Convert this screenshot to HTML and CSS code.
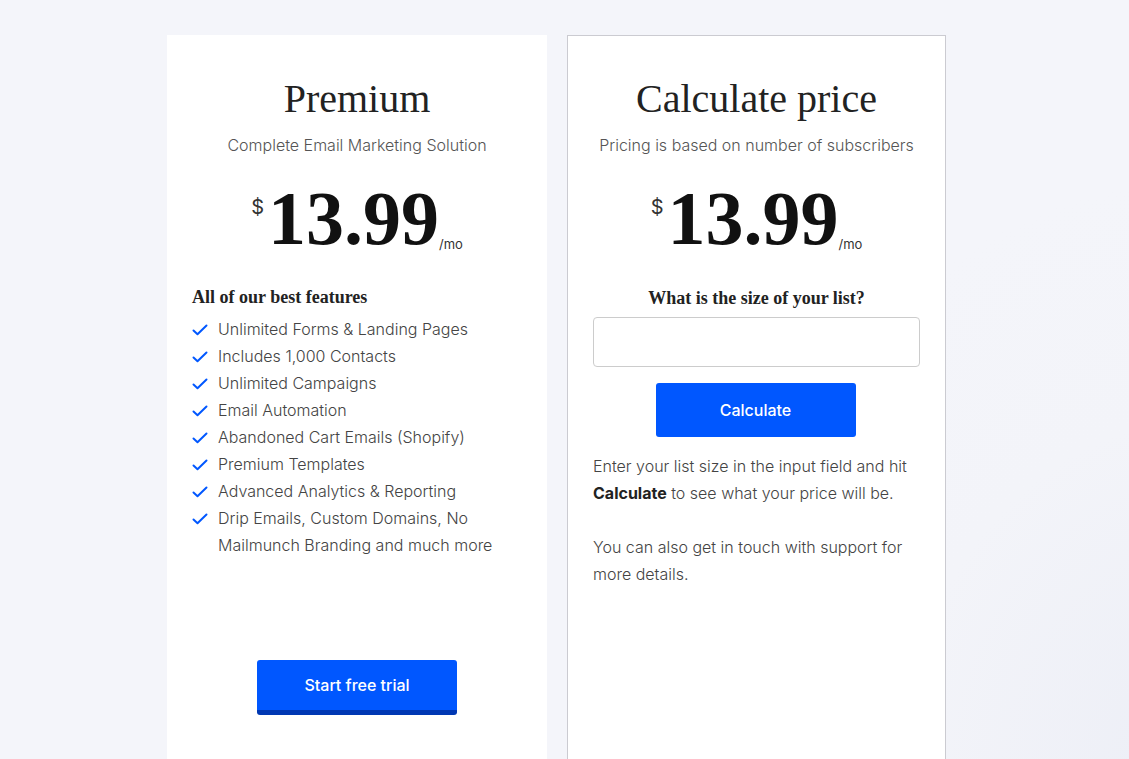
FILE: index.html
```html
<!DOCTYPE html>
<html lang="en">
<head>
<meta charset="utf-8">
<title>Pricing</title>
<link rel="stylesheet" href="styles.css">
</head>
<body>
<main class="plans">
  <section class="card card-premium">
    <h2 class="card-title">Premium</h2>
    <p class="card-sub">Complete Email Marketing Solution</p>
    <div class="price"><span class="cur">$</span><span class="amount">13.99</span><span class="per">/mo</span></div>
    <h3 class="feat-head">All of our best features</h3>
    <ul class="features">
      <li><svg class="check" viewBox="0 0 16 16"><path d="M1.5 8.5 L5.5 12.2 L14.5 3.5"/></svg><span>Unlimited Forms &amp; Landing Pages</span></li>
      <li><svg class="check" viewBox="0 0 16 16"><path d="M1.5 8.5 L5.5 12.2 L14.5 3.5"/></svg><span>Includes 1,000 Contacts</span></li>
      <li><svg class="check" viewBox="0 0 16 16"><path d="M1.5 8.5 L5.5 12.2 L14.5 3.5"/></svg><span>Unlimited Campaigns</span></li>
      <li><svg class="check" viewBox="0 0 16 16"><path d="M1.5 8.5 L5.5 12.2 L14.5 3.5"/></svg><span>Email Automation</span></li>
      <li><svg class="check" viewBox="0 0 16 16"><path d="M1.5 8.5 L5.5 12.2 L14.5 3.5"/></svg><span>Abandoned Cart Emails (Shopify)</span></li>
      <li><svg class="check" viewBox="0 0 16 16"><path d="M1.5 8.5 L5.5 12.2 L14.5 3.5"/></svg><span>Premium Templates</span></li>
      <li><svg class="check" viewBox="0 0 16 16"><path d="M1.5 8.5 L5.5 12.2 L14.5 3.5"/></svg><span>Advanced Analytics &amp; Reporting</span></li>
      <li><svg class="check" viewBox="0 0 16 16"><path d="M1.5 8.5 L5.5 12.2 L14.5 3.5"/></svg><span>Drip Emails, Custom Domains, No Mailmunch Branding and much more</span></li>
    </ul>
    <div class="cta-wrap"><a class="btn btn-trial" href="#">Start free trial</a></div>
  </section>
  <section class="card card-calc">
    <h2 class="card-title">Calculate price</h2>
    <p class="card-sub">Pricing is based on number of subscribers</p>
    <div class="price"><span class="cur">$</span><span class="amount">13.99</span><span class="per">/mo</span></div>
    <label class="calc-label" for="size">What is the size of your list?</label>
    <input class="calc-input" id="size" type="text">
    <div class="cta-wrap"><button class="btn btn-calc" type="button">Calculate</button></div>
    <p class="calc-text">Enter your list size in the input field and hit <strong>Calculate</strong> to see what your price will be.</p>
    <p class="calc-text">You can also get in touch with support for more details.</p>
  </section>
</main>
</body>
</html>
```
FILE: styles.css
```css
* { box-sizing: border-box; }
html, body { height: 100%; }
body {
  margin: 0;
  background: radial-gradient(ellipse 500px 600px at 1200px 780px, #eceef6 0%, #f3f4f9 60%, #f4f5fa 100%), #f4f5fa;
  font-family: Inter, "Liberation Sans", sans-serif;
  color: #444;
  overflow: hidden;
}
.plans {
  display: flex;
  gap: 20px;
  padding: 35px 0 0 167px;
  align-items: stretch;
  height: 100%;
}
.card {
  background: #fff;
  padding: 40px 25px 0;
  display: flex;
  flex-direction: column;
  min-height: 760px;
}
.card-premium { width: 380px; }
.card-calc { width: 379px; border: 1px solid #cbcbd1; padding: 39px 25px 0 25px; }
.card-title {
  margin: 0;
  text-align: center;
  font-family: "Liberation Serif", "DejaVu Serif", serif;
  font-weight: 400;
  font-size: 40px;
  line-height: 48px;
  color: #222;
}
.card-sub {
  margin: 11px 0 0;
  text-align: center;
  font-size: 16px;
  font-weight: 300;
  line-height: 22px;
  color: #555;
}
.price {
  display: flex;
  justify-content: center;
  align-items: flex-start;
  margin-top: 19px;
  color: #111;
}
.cur {
  font-size: 20px;
  line-height: 20px;
  margin-top: 22px;
  margin-right: 4px;
  color: #333;
}
.amount {
  font-family: "Liberation Serif", "DejaVu Serif", serif;
  font-weight: 700;
  font-size: 76px;
  line-height: 86px;
}
.per {
  align-self: flex-end;
  font-size: 13px;
  line-height: 13px;
  margin-bottom: 10px;
  color: #333;
}
.feat-head {
  margin: 23px 0 0;
  font-family: "Liberation Serif", "DejaVu Serif", serif;
  font-weight: 700;
  font-size: 18px;
  line-height: 26px;
  color: #222;
}
.features {
  list-style: none;
  margin: 6px 0 0;
  padding: 0;
}
.features li {
  display: flex;
  align-items: flex-start;
  gap: 10px;
  font-size: 16px;
  font-weight: 300;
  line-height: 27px;
  color: #444;
}
.check {
  flex: none;
  width: 16px;
  height: 16px;
  margin-top: 6px;
  fill: none;
  stroke: #0057ff;
  stroke-width: 2;
  stroke-linecap: round;
  stroke-linejoin: round;
}
.cta-wrap { display: flex; justify-content: center; }
.card-premium .cta-wrap { margin-top: 101px; }
.card-calc .cta-wrap { margin-right: 2px; }
.btn {
  display: flex;
  align-items: center;
  justify-content: center;
  width: 200px;
  background: #0057ff;
  color: #fff;
  font-family: Inter, "Liberation Sans", sans-serif;
  font-size: 16px;
  font-weight: 500;
  text-decoration: none;
  border: 0;
  border-radius: 3px;
}
.btn-trial {
  height: 55px;
  border-bottom: 5px solid #0038b3;
  padding-top: 0;
}
.btn-calc { height: 54px; margin-top: 16px; }
.calc-label {
  display: block;
  margin-top: 24px;
  text-align: center;
  font-family: "Liberation Serif", "DejaVu Serif", serif;
  font-weight: 700;
  font-size: 18px;
  line-height: 26px;
  color: #222;
}
.calc-input {
  display: block;
  margin-top: 6px;
  width: 100%;
  height: 50px;
  border: 1px solid #cccccc;
  border-radius: 4px;
  background: #fff;
}
.calc-text {
  margin: 16px 0 0;
  font-size: 16px;
  font-weight: 300;
  line-height: 27px;
  color: #444;
}
.calc-text + .calc-text { margin-top: 27px; }
.calc-text strong { color: #222; font-weight: 700; }
```
